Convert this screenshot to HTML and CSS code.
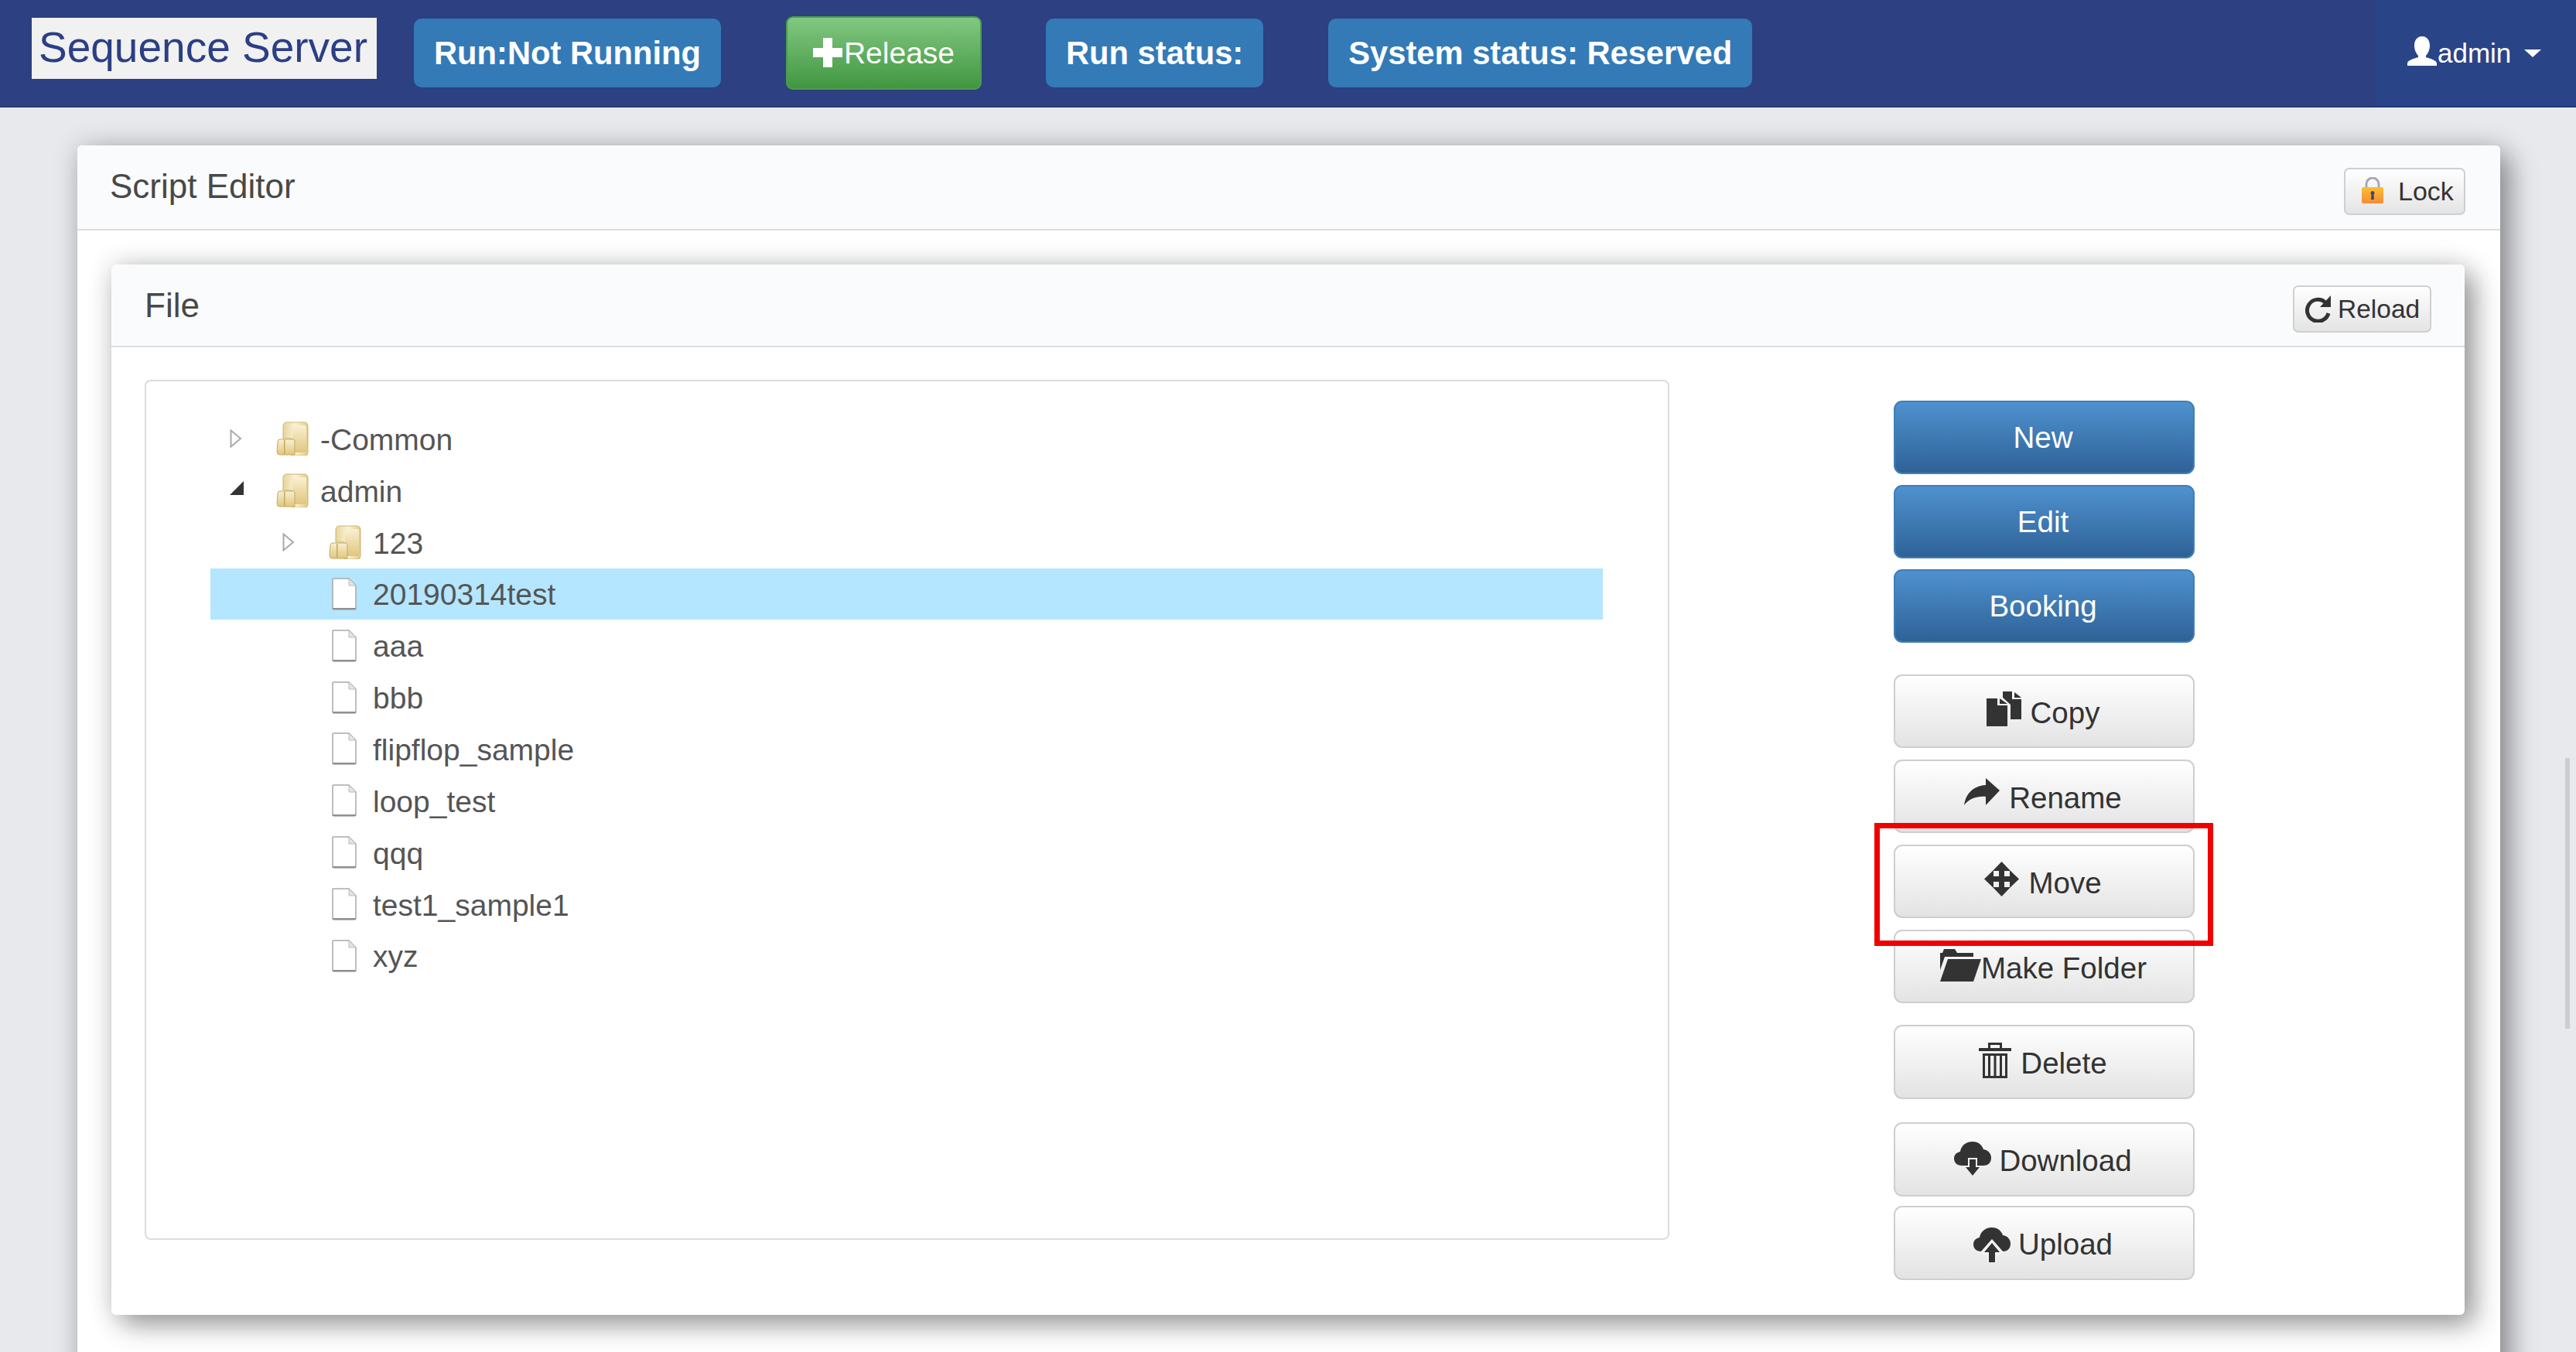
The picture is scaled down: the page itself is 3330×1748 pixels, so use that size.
FILE: index.html
```html
<!DOCTYPE html>
<html lang="en">
<head>
<meta charset="utf-8">
<title>Script Editor</title>
<link rel="stylesheet" href="styles.css">
</head>
<body>
<svg class="sprite" aria-hidden="true">
  <defs>
    <linearGradient id="gFolder" x1="0" y1="0" x2="1" y2="0">
      <stop offset="0" stop-color="#e6d49a"/><stop offset=".5" stop-color="#faf3d9"/><stop offset="1" stop-color="#e2cb88"/>
    </linearGradient>
    <linearGradient id="gFolder2" x1="0" y1="0" x2="0" y2="1">
      <stop offset="0" stop-color="#f9f0d2"/><stop offset="1" stop-color="#e0c67e"/>
    </linearGradient>
    <linearGradient id="gLock" x1="0" y1="0" x2="0" y2="1">
      <stop offset="0" stop-color="#fbc02f"/><stop offset="1" stop-color="#f58a3a"/>
    </linearGradient>
    <symbol id="folder" viewBox="0 0 42 44">
      <path d="M9 6 Q9 1 14 1 H36 Q41 1 41 6 V40 Q41 44 37 44 H20 V22 H9 Z" fill="url(#gFolder)" stroke="#cdb373" stroke-width="1"/>
      <path d="M21 8 Q21 5 24 5 H36 Q39 5 39 8 V40 H24 Q21 40 21 37 Z" fill="url(#gFolder2)"/>
      <path d="M2 26 Q2 23 5 23 H22 Q24 23 24 26 V43 H5 Q1 43 1 39 Z" fill="url(#gFolder2)" stroke="#c8a95e" stroke-width="1"/>
      <path d="M10 24 H11.500 V42 H10 Z" fill="#c4a75f"/>
    </symbol>
    <symbol id="file" viewBox="0 0 32 42">
      <path d="M2 1 H22 L31 10 V39 Q31 41 29 41 H3 Q1 41 1 39 V2 Q1 1 2 1 Z" fill="#fff" stroke="#a9a9a9" stroke-width="1.5"/>
      <path d="M22 1 V10 H31 Z" fill="#e4e4e4" stroke="#bbb" stroke-width="1"/>
      <path d="M1 40 H31" stroke="#8f8f8f" stroke-width="2"/>
    </symbol>
    <symbol id="copy" viewBox="0 0 45 45">
      <path d="M0 9H14V18H27V45H0Z"/><path d="M17 9L27 16H17Z"/>
      <path d="M21 0H33V10H45V36H31V17L21 8Z"/><path d="M36 1L45 8H36Z"/>
    </symbol>
    <symbol id="share" viewBox="0 0 46 35">
      <path d="M28 0L46 16L28 35V24C16 23 6 27 0 35C2 20 12 10 28 9Z"/>
    </symbol>
    <symbol id="move" viewBox="0 0 45 45">
      <path d="M22.500 0L34 12H26V19H33V11L45 22.500L33 34V26H26V33H34L22.500 45L11 33H19V26H12V34L0 22.500L12 11V19H19V12H11Z"/>
    </symbol>
    <symbol id="folder-open" viewBox="0 0 54 42">
      <path d="M1 5H4L6 0H20L23 5H44V10H7L1 27Z"/><path d="M11 13H54L44 42H1Z"/>
    </symbol>
    <symbol id="trash" viewBox="0 0 42 47">
      <path d="M0 8H12V1H30V8H42V12H0ZM15 4V8H27V4Z" fill-rule="evenodd"/>
      <path d="M5 15H37V47H5ZM8 18V44H12V18ZM15 18V44H19.500V18ZM22.500 18V44H27V18ZM30 18V44H34V18Z" fill-rule="evenodd"/>
    </symbol>
    <symbol id="cloud-down" viewBox="0 0 48 45">
      <path d="M24 0C31 0 36 4 38 10C44 11 48 15 48 21C48 28 43 31 38 31H10C4 31 0 27 0 22C0 17 3 14 8 13C9 6 15 0 24 0Z"/>
      <path d="M18 21H30V31H36L24 45L12 31H18Z" fill="#f3f3f3"/>
      <path d="M20 23H28V33H33L24 44L15 33H20Z"/>
    </symbol>
    <symbol id="cloud-up" viewBox="0 0 48 45">
      <path d="M24 0C31 0 36 4 38 10C44 11 48 15 48 21C48 28 43 31 38 31H10C4 31 0 27 0 22C0 17 3 14 8 13C9 6 15 0 24 0Z"/>
      <path d="M24 15L39 32L33 36H30V45H18V36H15L9 32Z" fill="#f3f3f3"/>
      <path d="M24 20L34 32H28V45H20V32H14Z"/>
    </symbol>
    <symbol id="reload" viewBox="0 0 34 36">
      <path d="M26 10A14 14 0 1 0 30 24" fill="none" stroke="currentColor" stroke-width="5"/>
      <path d="M33 1V16H19Z"/>
    </symbol>
    <symbol id="user" viewBox="0 0 38 38">
      <path d="M19 0C26 0 29 6 29 12C29 18 26 23 24 25V27C30 29 38 31 38 35V38H0V35C0 31 8 29 14 27V25C12 23 9 18 9 12C9 6 12 0 19 0Z"/>
    </symbol>
    <symbol id="plus" viewBox="0 0 38 38">
      <path d="M13 0H25V13H38V25H25V38H13V25H0V13H13Z"/>
    </symbol>
    <symbol id="lock" viewBox="0 0 28 34">
      <path d="M6 14V9A8 8 0 0 1 22 9V14" fill="none" stroke="#a9a6bb" stroke-width="3"/>
      <rect x="0" y="13" width="28" height="21" rx="2" fill="url(#gLock)"/>
      <path d="M14 18A2.500 2.500 0 0 1 15.500 22.500L16 29H12L12.500 22.500A2.500 2.500 0 0 1 14 18Z" fill="#4a4566"/>
    </symbol>
    <symbol id="tri-right" viewBox="0 0 16 24">
      <path d="M1.500 1.500L14 12L1.500 22.500Z" fill="#fff" stroke="#aaa" stroke-width="2"/>
    </symbol>
    <symbol id="tri-open" viewBox="0 0 18 18">
      <path d="M18 0V18H0Z" fill="#333"/>
    </symbol>
  </defs>
</svg>

<nav class="navbar">
  <div class="logo">Sequence Server</div>
  <div class="badge badge-run">Run:Not Running</div>
  <button class="release"><svg class="ico-plus"><use href="#plus"/></svg>Release</button>
  <div class="badge badge-status">Run status:</div>
  <div class="badge badge-system">System status: Reserved</div>
  <div class="user-menu">
    <svg class="ico-user"><use href="#user"/></svg><span>admin</span><i class="caret"></i>
  </div>
</nav>

<main class="page">
  <section class="card outer">
    <header class="card-head outer-head">
      <h2 class="card-title">Script Editor</h2>
      <button class="mini mini-lock"><svg class="ico-lock"><use href="#lock"/></svg>Lock</button>
    </header>
    <div class="outer-body">
      <section class="card inner">
        <header class="card-head inner-head">
          <h3 class="card-title">File</h3>
          <button class="mini mini-reload"><svg class="ico-reload"><use href="#reload"/></svg>Reload</button>
        </header>
        <div class="inner-body">
          <div class="tree-box">
            <ul class="tree">
              <li class="row"><svg class="tri"><use href="#tri-right"/></svg><svg class="ico-folder"><use href="#folder"/></svg><span class="label">-Common</span></li>
              <li class="row"><svg class="tri tri-down"><use href="#tri-open"/></svg><svg class="ico-folder"><use href="#folder"/></svg><span class="label">admin</span></li>
              <li class="row lvl1"><svg class="tri"><use href="#tri-right"/></svg><svg class="ico-folder"><use href="#folder"/></svg><span class="label">123</span></li>
              <li class="row lvl1 selected"><span class="spacer"></span><svg class="ico-file"><use href="#file"/></svg><span class="label">20190314test</span></li>
              <li class="row lvl1"><span class="spacer"></span><svg class="ico-file"><use href="#file"/></svg><span class="label">aaa</span></li>
              <li class="row lvl1"><span class="spacer"></span><svg class="ico-file"><use href="#file"/></svg><span class="label">bbb</span></li>
              <li class="row lvl1"><span class="spacer"></span><svg class="ico-file"><use href="#file"/></svg><span class="label">flipflop_sample</span></li>
              <li class="row lvl1"><span class="spacer"></span><svg class="ico-file"><use href="#file"/></svg><span class="label">loop_test</span></li>
              <li class="row lvl1"><span class="spacer"></span><svg class="ico-file"><use href="#file"/></svg><span class="label">qqq</span></li>
              <li class="row lvl1"><span class="spacer"></span><svg class="ico-file"><use href="#file"/></svg><span class="label">test1_sample1</span></li>
              <li class="row lvl1"><span class="spacer"></span><svg class="ico-file"><use href="#file"/></svg><span class="label">xyz</span></li>
            </ul>
          </div>
          <div class="actions">
            <div class="group group-blue">
              <button class="btn btn-primary">New</button>
              <button class="btn btn-primary">Edit</button>
              <button class="btn btn-primary">Booking</button>
            </div>
            <div class="group group-file">
              <button class="btn"><svg class="ico ico-copy"><use href="#copy"/></svg>Copy</button>
              <button class="btn"><svg class="ico ico-share"><use href="#share"/></svg>Rename</button>
              <button class="btn"><svg class="ico ico-move"><use href="#move"/></svg>Move</button>
              <button class="btn"><svg class="ico ico-open"><use href="#folder-open"/></svg>Make Folder</button>
            </div>
            <div class="group group-delete">
              <button class="btn btn-tall"><svg class="ico ico-trash"><use href="#trash"/></svg>Delete</button>
            </div>
            <div class="group group-transfer">
              <button class="btn btn-tall"><svg class="ico ico-down"><use href="#cloud-down"/></svg>Download</button>
              <button class="btn btn-tall"><svg class="ico ico-up"><use href="#cloud-up"/></svg>Upload</button>
            </div>
            <div class="highlight"></div>
          </div>
        </div>
      </section>
    </div>
  </section>
</main>
<div class="scroll-thumb"></div>
</body>
</html>
```

FILE: styles.css
```css
* { box-sizing: border-box; }
html, body { margin: 0; height: 1748px; overflow: hidden; }
body {
  background: #e8e9ed;
  font-family: "Liberation Sans", Arial, sans-serif;
  color: #333;
  position: relative;
}
button { font-family: inherit; cursor: pointer; }
.sprite { width: 0; height: 0; position: absolute; }

/* Navbar */
.navbar {
  height: 139px;
  background: #2c4082;
  border-bottom: 2px solid #24397a;
  display: flex;
  align-items: center;
  padding-left: 41px;
}
.logo {
  width: 446px;
  height: 79px;
  margin-bottom: 12px;
  background: #f1f1f1;
  color: #2b3f85;
  font-size: 55px;
  line-height: 76px;
  padding-left: 9px;
  white-space: nowrap;
}
.badge {
  height: 89px;
  background: #337ab7;
  color: #fff;
  font-weight: 700;
  font-size: 41.700px;
  line-height: 89px;
  padding: 0 26px;
  border-radius: 10px;
  white-space: nowrap;
}
.badge-run { margin-left: 48px; }
.badge-status { margin-left: 83px; }
.badge-system { margin-left: 84px; }
.release {
  margin-left: 84px;
  width: 253px;
  height: 95px;
  border: 2px solid #4a9d4a;
  border-radius: 9px;
  background: linear-gradient(#82c882, #419641);
  color: #fff;
  font-size: 39px;
  display: flex;
  align-items: center;
  justify-content: center;
  padding: 0;
}
.ico-plus { width: 38px; height: 38px; fill: #fff; margin: -2px 2px 0 0; }
.user-menu {
  margin-left: auto;
  width: 258px;
  height: 137px;
  background: #2a4488;
  color: #fff;
  font-size: 35px;
  display: flex;
  align-items: center;
  padding-left: 40px;
}
.ico-user { width: 38px; height: 38px; fill: #fff; margin: -6px 1px 0 0; }
.caret {
  margin: 0 0 0 17px;
  border-left: 11px solid transparent;
  border-right: 11px solid transparent;
  border-top: 10px solid #fff;
}

/* Cards */
.page { padding: 49px 98px 0 100px; }
.card {
  background: #fff;
  border-radius: 6px;
  box-shadow: 0 0 34px rgba(0, 0, 0, .16), 14px 14px 34px rgba(0, 0, 0, .34);
}
.outer { height: 1700px; }
.card-head {
  display: flex;
  align-items: center;
  justify-content: space-between;
  background: #fafbfc;
  border-bottom: 2px solid #dedede;
  border-radius: 6px 6px 0 0;
}
.outer-head { height: 110px; padding: 0 45px 0 42px; }
.outer-head .card-title { margin-top: -2px; }
.inner-head { height: 107px; padding: 0 43px 0 43px; }
.card-title { margin: 0; font-size: 44px; font-weight: 400; color: #484848; }
.outer-body { padding: 44px 46px 0 44px; }
.inner { height: 1358px; }
.inner-body { display: flex; padding: 42px 43px 0 43px; }

/* Small header buttons */
.mini {
  height: 61px;
  margin-top: 10px;
  border: 2px solid #cfcfcf;
  border-radius: 7px;
  background: linear-gradient(#fff, #e4e4e4);
  color: #333;
  font-size: 34px;
  display: flex;
  align-items: center;
  padding: 0;
}
.mini-lock { width: 157px; padding-left: 21px; }
.ico-lock { width: 28px; height: 34px; margin: -2px 19px 0 0; }
.mini-reload { width: 179px; padding-left: 14px; font-size: 33.500px; }
.ico-reload { width: 34px; height: 36px; fill: #333; color: #333; margin: -2px 8px 0 0; }

/* Tree */
.tree-box {
  width: 1971px;
  height: 1112px;
  border: 2px solid #dcdcdc;
  border-radius: 8px;
  padding: 41px 0 0 83px;
  flex: none;
}
.tree { list-style: none; margin: 0; padding: 0; width: 1800px; }
.row {
  height: 66.850px;
  display: flex;
  align-items: center;
  font-size: 39px;
  color: #555;
  white-space: nowrap;
}
.label { padding-top: 3px; }
.row.lvl1 { padding-left: 68px; }
.row.selected { background: #b4e6ff; }
.tri { width: 16px; height: 24px; margin: 0 44px 0 25px; flex: none; }
.tri-down { width: 18px; height: 18px; margin: -6px 42px 0 25px; }
.spacer { width: 85px; flex: none; }
.ico-folder { width: 42px; height: 44px; margin-right: 15px; flex: none; }
.ico-file { width: 32px; height: 42px; margin: 0 21px 0 4px; flex: none; }

/* Action buttons */
.actions { position: relative; margin: 27px 0 0 290px; width: 389px; }
.group { display: flex; flex-direction: column; gap: 14px; }
.group-file { margin-top: 41px; gap: 15px; }
.group-delete { margin-top: 28px; }
.group-transfer { margin-top: 30px; gap: 12px; }
.btn {
  height: 95px;
  width: 389px;
  border: 2px solid #cecece;
  border-radius: 11px;
  background: linear-gradient(#fff, #e3e3e3);
  color: #333;
  font-size: 38.500px;
  display: flex;
  align-items: center;
  justify-content: center;
  padding: 4px 3px 0 0;
}
.btn-tall { height: 96px; }
.btn-primary {
  background: linear-gradient(#4f91cf, #2e6297);
  border-color: #3f7fb8;
  color: #fff;
  padding: 0 3px 0 0;
}
.ico { fill: #333; flex: none; margin-bottom: 10px; margin-right: 12px; }
.ico-copy { width: 45px; height: 45px; }
.ico-share { width: 46px; height: 35px; margin-bottom: 16px; }
.ico-move { width: 45px; height: 45px; }
.ico-open { width: 54px; height: 42px; margin-right: 0; margin-bottom: 8px; }
.ico-trash { width: 42px; height: 47px; }
.ico-down { width: 48px; height: 45px; margin-bottom: 6px; margin-right: 10px; }
.ico-up { width: 48px; height: 45px; margin-bottom: 0; margin-right: 10px; }

.highlight {
  position: absolute;
  left: -25px;
  top: 546px;
  width: 438px;
  height: 159px;
  border: 7px solid #f00000;
}
.scroll-thumb {
  position: absolute;
  left: 3316px;
  top: 980px;
  width: 6px;
  height: 350px;
  background: #cdced3;
}
```
